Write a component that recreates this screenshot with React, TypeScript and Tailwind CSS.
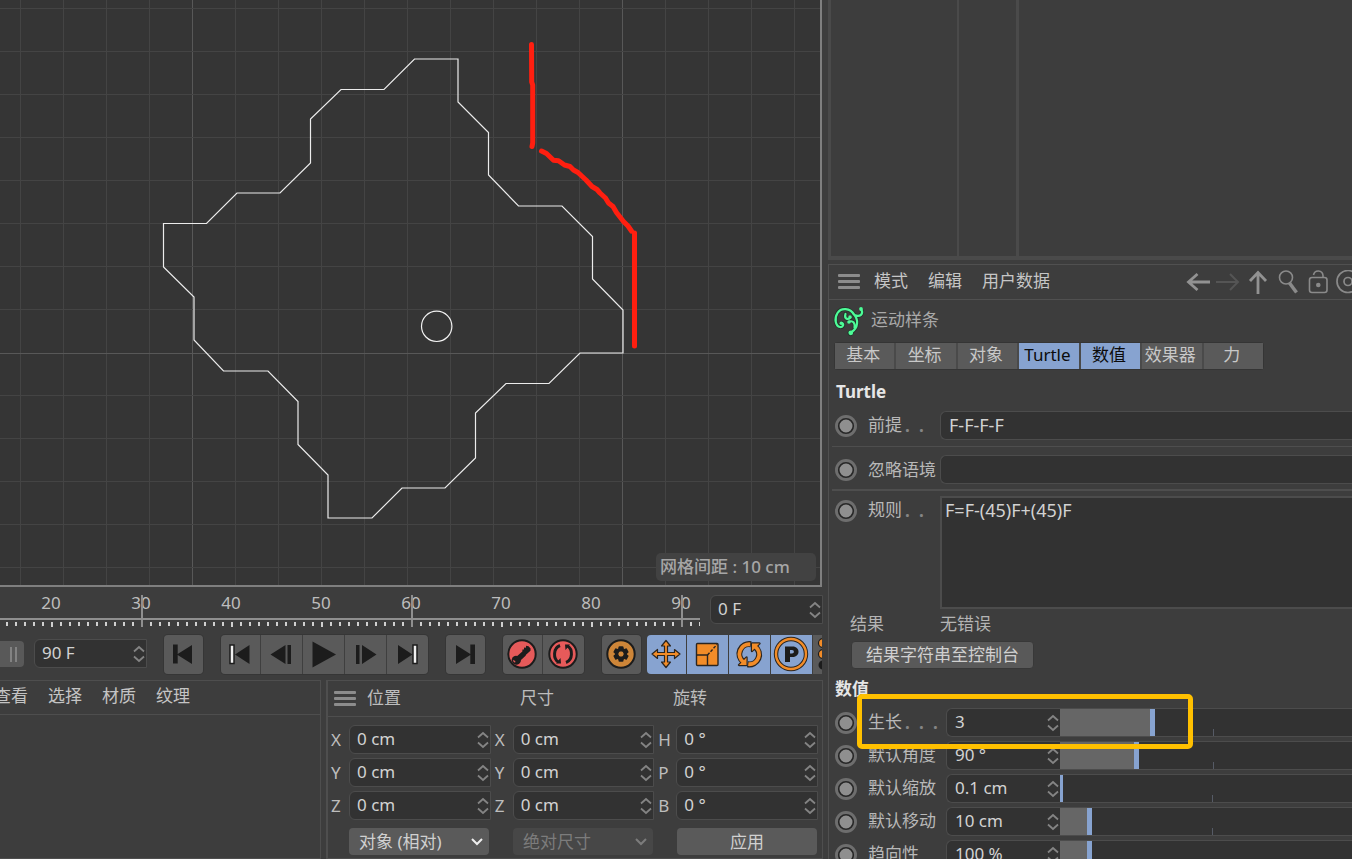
import React from "react";

const FONT = "font-['Noto_Sans','Noto_Sans_CJK_SC',sans-serif]";

const range = (n: number) => Array.from({ length: n }, (_, i) => i);

const SPLINE =
  "414.5,59 458,59 458,102 488.5,132.5 488.5,175 518.5,206 562,206 592.5,236.5 592.5,279 623,310 623,353 580,353 549,383.5 506,383.5 475.5,413 475.5,458 445,488 402,488 372,518 328,518 328,475 298,444.5 298,401.5 268,371 223.5,371 194,340 194,297 163.5,267 163.5,223.5 206.5,223.5 237,193 280,193 310.5,163 310.5,119 341,89.5 384,89.5";

function Viewport() {
  return (
    <section
      aria-label="viewport"
      className="relative min-h-0 flex-1 overflow-hidden border-r-2 border-b-2 border-[#7f7f7f] bg-[#353535] mr-[6px]"
    >
      <svg className="block h-full w-full" aria-hidden="true">
        {range(60).map((i) => {
          const x = 20 + i * 43;
          const major = (x - 192) % 430 === 0;
          return (
            <rect key={`v${i}`} x={x} y="0" width="1" height="100%" fill={major ? "#585858" : "#444444"} />
          );
        })}
        {range(40).map((i) => {
          const y = 9 + i * 43;
          const major = (y - 353) % 430 === 0;
          return (
            <rect key={`h${i}`} x="0" y={major ? y : y - 1} width="100%" height="1" fill={major ? "#585858" : "#444444"} />
          );
        })}
        <polygon points={SPLINE} fill="none" stroke="#ececec" strokeWidth="1.2" />
        <circle cx="436.7" cy="326.3" r="15.2" fill="none" stroke="#f2f2f2" strokeWidth="1.2" />
        <g fill="none" stroke="#ff1f10" strokeWidth="5" strokeLinecap="round" strokeLinejoin="round">
          <path d="M531.5 44.5 L531.7 82 L532.7 85 L532.7 143 L532 146.5" />
          <path d="M541.5 151 L546.5 153.5 L553.5 160.3 L558.5 160.8 L564.5 165 L570 166.5 L573.5 170 L578 172.5 L586 180 L592 186.5 L597 189.5 L600 193 L605.5 198 L608.5 203 L613 206.5 L616.5 212.5 L623.5 221.5 L628 226 L631.5 231" />
          <path d="M634.5 233 V346" />
        </g>
      </svg>
      <div className="absolute right-[4px] bottom-[4px] w-[160px] rounded-[5px] bg-[#424242] px-[4px] text-[17px] leading-[28px] font-medium text-[#a6a6a6]">
        网格间距 : 10 cm
      </div>
    </section>
  );
}

function Spinner() {
  return (
    <svg width="12" height="18" viewBox="0 0 12 18" className="mr-[1px] shrink-0" fill="none" stroke="#848484" strokeWidth="1.8" aria-hidden="true">
      <path d="M1 6.5 L6 2 L11 6.5 M1 11.5 L6 16 L11 11.5" />
    </svg>
  );
}

function NumberField({ label, value, className = "" }: { label: string; value: string; className?: string }) {
  return (
    <div className={`flex h-[29px] items-center rounded-l-[6px] border border-[#4c4c4c] bg-[#323232] pl-[7px] ${className}`}>
      <input
        aria-label={label}
        defaultValue={value}
        className="h-full w-0 min-w-0 flex-1 bg-transparent pb-[2px] text-[17px] text-[#d2d2d2] outline-none"
      />
      <Spinner />
    </div>
  );
}

function Timeline() {
  return (
    <div className="flex h-[46px] items-start">
      <div className="relative h-full w-[700px] shrink-0">
        <div className="flex pl-[6px] text-[17px] leading-[32px] text-[#bdbdbd]">
          {[20, 30, 40, 50, 60, 70, 80, 90].map((n) => (
            <span key={n} className="w-[90px] shrink-0 text-center">
              {n}
            </span>
          ))}
        </div>
        <svg className="absolute inset-0 h-full w-full" aria-hidden="true">
          <rect x="0" y="31" width="700" height="2" fill="#8f8f8f" />
          {range(78).map((i) => {
            const frame = 15 + i;
            const x = 142 + (frame - 30) * 9 - 1;
            return <rect key={i} x={x} y="35" width="2" height={frame % 10 === 0 ? 5 : 4} fill="#d0d0d0" />;
          })}
          {[141, 411, 681].map((x) => (
            <rect key={x} x={x} y="8" width="2" height="32" fill="#8f8f8f" />
          ))}
        </svg>
      </div>
      <NumberField label="当前帧" value="0 F" className="mt-[8px] ml-[10px] w-[113px]" />
    </div>
  );
}

function Tool({
  label,
  first,
  last,
  active,
  children,
}: {
  label: string;
  first?: boolean;
  last?: boolean;
  active?: boolean;
  children: React.ReactNode;
}) {
  return (
    <button
      type="button"
      aria-label={label}
      className={`flex h-[39px] shrink-0 items-center overflow-hidden ${active ? "bg-[#87a3d0]" : "bg-[#5a5a5a]"} ${
        first ? "w-[39px] rounded-l-[4px]" : "w-[42px] border-l border-[#3f3f3f]"
      } ${last ? "rounded-r-[4px]" : ""}`}
    >
      <svg width="40" height="39" viewBox="0 0 40 39" className="shrink-0" fill="#1c1c1c">
        {children}
      </svg>
    </button>
  );
}

const group = "flex shrink-0 rounded-[4px] ring-1 ring-[#363636]";

function Transport() {
  return (
    <div className="mr-[6px] flex h-[47px] items-start overflow-hidden pt-[2px]">
      <div className="mt-[6px] flex h-[26px] w-[24px] shrink-0 items-center justify-center gap-[3px] rounded-r-[4px] bg-[#595959] pl-[3px]">
        <i className="h-[15px] w-[2px] bg-[#828282]" />
        <i className="h-[15px] w-[2px] bg-[#828282]" />
      </div>
      <NumberField label="结束帧" value="90 F" className="mt-[4px] ml-[10px] w-[113px] shrink-0" />
      <div className={`${group} ml-[17px]`}>
        <Tool label="转到开始" first last>
          <path d="M9 9.5h4.7v9.6L28 10v19L13.700 20v8.500H9z" />
        </Tool>
      </div>
      <div className={`${group} ml-[18px]`}>
        <Tool label="上一关键帧" first>
          <rect x="9" y="10" width="4" height="18.500" fill="#f0f0f0" stroke="#1c1c1c" strokeWidth="1.500" />
          <path d="M14 19.500L28.500 10v19z" />
        </Tool>
        <Tool label="上一帧">
          <path d="M9.500 19.500L24.500 10v19zM26.500 10h3.500v19h-3.500z" />
        </Tool>
        <Tool label="播放">
          <path d="M9.500 6.500L33 19.500L9.500 32.500z" />
        </Tool>
        <Tool label="下一帧">
          <path d="M11 10h3.500v19H11zM17 10L31.500 19.500L17 29z" />
        </Tool>
        <Tool label="下一关键帧" last>
          <path d="M11 10L25.500 19.500L11 29z" />
          <rect x="26" y="10" width="4" height="18.500" fill="#f0f0f0" stroke="#1c1c1c" strokeWidth="1.500" />
        </Tool>
      </div>
      <div className={`${group} ml-[18px]`}>
        <Tool label="转到结束" first last>
          <path d="M10 10L24.300 19V9.500H29V29h-4.700v-9L10 29z" />
        </Tool>
      </div>
      <div className={`${group} ml-[18px]`}>
        <Tool label="记录活动对象" first>
          <circle cx="19" cy="19" r="13.700" fill="#e65a5a" stroke="#1c1c1c" strokeWidth="2" />
          <g transform="rotate(-42 19 19)">
            <path d="M9.500 15.300a4.600 4.600 0 0 1 4.600 2H21l1.300-1.300 1.200 1 1.300-1.500 1.200 1.500 1.500-1.300 1.500 2v3l-1.500 1.500h-6l-1 .500h-6.200a4.600 4.600 0 1 1-4.800-7.400zM9 17.700a1.500 1.500 0 1 0 .01 3z" fillRule="evenodd" />
          </g>
        </Tool>
        <Tool label="自动关键帧" last>
          <circle cx="20" cy="19" r="13.700" fill="#e65a5a" stroke="#1c1c1c" strokeWidth="2" />
          <g fill="none" stroke="#1c1c1c" strokeWidth="3">
            <path d="M17 10.500C10 13 10 24 15.500 27" />
            <path d="M23 27.500C30 25 30 14 24.500 11" />
          </g>
          <path d="M18 28.500L13 28.500L17.500 23zM22 9.500h5L22.500 15z" />
        </Tool>
      </div>
      <div className={`${group} ml-[18px]`}>
        <Tool label="关键帧选集" first last>
          <circle cx="19" cy="19" r="13.700" fill="#cd8538" stroke="#1c1c1c" strokeWidth="2" />
          {range(6).map((i) => (
            <rect key={i} x="16.500" y="11.300" width="5" height="5" rx="1" transform={`rotate(${i * 60} 19 19)`} />
          ))}
          <circle cx="19" cy="19" r="4.500" fill="none" stroke="#1c1c1c" strokeWidth="3.500" />
        </Tool>
      </div>
      <div className="ml-[6px] flex shrink-0">
        <Tool label="移动" first active>
          <path
            d="M19 5.500l4.500 5.500h-3v6.500h7v-3l5.500 4.500-5.500 4.500v-3h-7v6.500h3l-4.500 5.500-4.500-5.500h3v-6.500h-7v3l-5.500-4.500 5.500-4.500v3h7v-6.500h-3z"
            fill="#f28c28"
            stroke="#2b2520"
            strokeWidth="1.200"
            strokeLinejoin="round"
          />
        </Tool>
        <Tool label="缩放" active>
          <rect x="9.500" y="8.500" width="21.500" height="22" rx="1" fill="#f28c28" stroke="#2b2520" strokeWidth="1.400" />
          <path d="M9.500 20h11v10.500" fill="none" stroke="#2b2520" strokeWidth="1.400" />
          <path d="M20.500 20L30 9.500" fill="none" stroke="#2b2520" strokeWidth="1.400" strokeDasharray="3 1.500" />
        </Tool>
        <Tool label="旋转" active>
          <g fill="#f28c28" stroke="#2b2520" strokeWidth="2.400" strokeLinejoin="round">
            <path d="M10 30h7.500v-7.500zM30.500 8.500H23V16z" />
          </g>
          <path d="M14.500 26.800A9.800 9.800 0 0 1 22 9.200M26 11.700A9.800 9.800 0 0 1 18.500 29.300" fill="none" stroke="#2b2520" strokeWidth="6" />
          <path d="M14.500 27A9.800 9.800 0 0 1 21.200 9.300M26 11.500A9.800 9.800 0 0 1 19.300 29.200" fill="none" stroke="#f28c28" strokeWidth="3.800" />
          <path d="M10 30h7.500v-7.500zM30.500 8.500H23V16z" fill="#f28c28" />
        </Tool>
        <Tool label="参数" active>
          <circle cx="20" cy="19" r="15" fill="none" stroke="#2b2520" strokeWidth="4.400" />
          <circle cx="20" cy="19" r="15" fill="none" stroke="#f28c28" strokeWidth="2.400" />
          <path d="M14 11.500h7.500c8 0 8 10.500 0 10.500H19v5h-5zM19 15v3.500h2c2.500 0 2.500-3.500 0-3.500z" fillRule="evenodd" />
        </Tool>
        <Tool label="点级别动画">
          <circle cx="10" cy="8" r="4.500" fill="#f28c28" stroke="#1c1c1c" strokeWidth="1.200" />
          <circle cx="10" cy="19" r="4.500" fill="#f28c28" stroke="#1c1c1c" strokeWidth="1.200" />
          <circle cx="10" cy="30" r="4.500" />
        </Tool>
      </div>
    </div>
  );
}

function MenuIcon() {
  return (
    <svg width="22" height="16" viewBox="0 0 22 16" fill="#8c8c8c" aria-hidden="true" className="shrink-0">
      <rect width="22" height="3" rx="1" />
      <rect y="6" width="22" height="3" rx="1" />
      <rect y="12" width="22" height="3" rx="1" />
    </svg>
  );
}

function Materials() {
  return (
    <section className="w-[321px] shrink-0 border-t border-r border-b border-[#4e4e4e]">
      <nav className="-ml-[6px] flex h-[34px] items-center gap-[20px] border-b border-[#4e4e4e] pb-[4px] text-[17px] text-[#c4c4c4]">
        {["查看", "选择", "材质", "纹理"].map((t) => (
          <button type="button" key={t} className="leading-[20px]">
            {t}
          </button>
        ))}
      </nav>
    </section>
  );
}

const AXES = [
  { title: "位置", labels: ["X", "Y", "Z"], value: "0 cm" },
  { title: "尺寸", labels: ["X", "Y", "Z"], value: "0 cm" },
  { title: "旋转", labels: ["H", "P", "B"], value: "0 °" },
];

function Dropdown({ label, option, disabled }: { label: string; option: string; disabled?: boolean }) {
  return (
    <div
      className={`relative ml-[18px] h-[27px] w-[140px] rounded-[4px] ${
        disabled ? "bg-[#474747] text-[#7c7c7c]" : "bg-[#5a5a5a] text-[#d0d0d0]"
      }`}
    >
      <select
        aria-label={label}
        disabled={disabled}
        className="h-full w-full appearance-none bg-transparent pl-[10px] text-[17px] leading-[26px] text-inherit opacity-100 outline-none"
      >
        <option>{option}</option>
      </select>
      <svg
        className="pointer-events-none absolute top-[10px] right-[6px]"
        width="12"
        height="8"
        viewBox="0 0 12 8"
        fill="none"
        stroke={disabled ? "#7c7c7c" : "#ededed"}
        strokeWidth="2"
        aria-hidden="true"
      >
        <path d="M1 1 L6 6 L11 1" />
      </svg>
    </div>
  );
}

function Coordinates() {
  return (
    <section className="ml-[5px] mr-[5px] min-w-0 flex-1 border border-l-2 border-[#4e4e4e]">
      <header className="flex h-[36px] items-center border-b border-[#4e4e4e] pl-[6px] text-[17px] text-[#bdbdbd]">
        <MenuIcon />
        <span className="ml-[11px] w-[153px] pb-[2px]">位置</span>
        <span className="w-[153px] pb-[2px]">尺寸</span>
        <span className="pb-[2px]">旋转</span>
      </header>
      <div className="mt-[8px] grid grid-cols-3 gap-x-[4px] pr-[4px] pl-[3px]">
        {AXES.map((axis) => (
          <div key={axis.title} className="grid gap-y-[4px]">
            {axis.labels.map((l) => (
              <div key={l} className="flex items-center text-[17px] text-[#bdbdbd]">
                <span className="w-[18px] shrink-0">{l}</span>
                <NumberField label={`${axis.title} ${l}`} value={axis.value} className="min-w-0 flex-1" />
              </div>
            ))}
          </div>
        ))}
      </div>
      <div className="mt-[8px] grid grid-cols-3 gap-x-[4px] px-[3px]">
        <Dropdown label="坐标模式" option="对象 (相对)" />
        <Dropdown label="尺寸模式" option="绝对尺寸" disabled />
        <button type="button" className="ml-[18px] h-[27px] w-[140px] rounded-[4px] bg-[#5a5a5a] text-[17px] leading-[26px] text-[#d0d0d0]">
          应用
        </button>
      </div>
    </section>
  );
}

function KeyDot() {
  return (
    <button type="button" aria-label="关键帧" className="flex h-[29px] w-[22px] shrink-0 items-center">
      <svg width="22" height="23" viewBox="0 0 22 23" aria-hidden="true">
        <circle cx="11" cy="12" r="11" fill="#6e6e6e" />
        <circle cx="11" cy="12" r="7.300" fill="#8f8f8f" stroke="#272727" strokeWidth="1.600" />
      </svg>
    </button>
  );
}

function FieldLabel({ id, text, dots = 0, className }: { id: string; text: string; dots?: number; className: string }) {
  return (
    <label htmlFor={id} className={`ml-[11px] flex shrink-0 text-[17px] leading-[27px] text-[#b8b8b8] ${className}`}>
      {text}
      {range(dots).map((i) => (
        <span key={i} className="w-[14px] pl-[3px] leading-[29px] font-bold text-[#858585]">
          .
        </span>
      ))}
    </label>
  );
}

const SLIDERS = [
  { id: "growth", text: "生长", dots: 3, value: "3", fill: 32.5, tick: 52.5 },
  { id: "angle", text: "默认角度", value: "90 °", fill: 27.2, tick: 52.5 },
  { id: "scale", text: "默认缩放", value: "0.1 cm", fill: 0.8, tick: 52 },
  { id: "move", text: "默认移动", value: "10 cm", fill: 11, tick: 52 },
  { id: "tropism", text: "趋向性", value: "100 %", fill: 11, tick: 52 },
];

function SliderRow({ id, text, dots, value, fill, tick }: (typeof SLIDERS)[number]) {
  return (
    <div className="flex shrink-0 items-start">
      <KeyDot />
      <FieldLabel id={id} text={text} dots={dots} className="w-[78px]" />
      <div className="flex h-[29px] w-[114px] shrink-0 items-center rounded-l-[6px] border border-r-0 border-[#4c4c4c] bg-[#323232] pl-[8px]">
        <input id={id} defaultValue={value} className="h-full w-0 min-w-0 flex-1 bg-transparent pb-[2px] text-[17px] text-[#d2d2d2] outline-none" />
        <Spinner />
      </div>
      <div className="relative h-[29px] min-w-0 flex-1 border-y border-[#4c4c4c] bg-[#323232]">
        <div className="h-full border-r-[5px] border-[#87a3d0] bg-[#666666]" style={{ width: `${fill}%`, borderRightWidth: fill < 2 ? 3 : 5 }} />
        <span className="absolute bottom-0 h-[7px] w-px bg-[#565b66]" style={{ left: `${tick}%` }} />
        <input type="range" aria-label={text} min="0" max="100" defaultValue={fill} className="absolute inset-0 h-full w-full opacity-0" />
      </div>
    </div>
  );
}

function HeaderIcons() {
  const base = "shrink-0";
  return (
    <div className="-mr-[8px] ml-auto flex gap-[6px]">
      <svg className={base} width="24" height="24" viewBox="0 0 24 24" fill="none" stroke="#929292" strokeWidth="2.800">
        <path d="M24 12H2.500M11.500 4L2.500 12l9 8" />
      </svg>
      <svg className={base} width="24" height="24" viewBox="0 0 24 24" fill="none" stroke="#555555" strokeWidth="2">
        <path d="M0 12h22M14 4l8 8-8 8" />
      </svg>
      <svg className={base} width="24" height="24" viewBox="0 0 24 24" fill="none" stroke="#929292" strokeWidth="2.800">
        <path d="M12 24V2.500M4 11l8-8.500 8 8.500" />
      </svg>
      <svg className={base} width="24" height="24" viewBox="0 0 24 24" fill="none" stroke="#8a8a8a">
        <circle cx="10" cy="7.500" r="6.500" strokeWidth="1.600" />
        <path d="M13.500 13L20.500 22.500" strokeWidth="3.500" />
      </svg>
      <svg className={base} width="24" height="24" viewBox="0 0 24 24" fill="none" stroke="#8a8a8a" strokeWidth="1.600">
        <rect x="3.500" y="7.500" width="17.500" height="15" rx="2.500" />
        <path d="M7.500 5C8.500-.5 16.500-.5 17 5.500V7.500" />
        <circle cx="12.300" cy="15" r="2.300" fill="#8a8a8a" stroke="none" />
      </svg>
      <svg className={base} width="24" height="24" viewBox="0 0 24 24" fill="none" stroke="#8a8a8a" strokeWidth="1.700">
        <circle cx="12" cy="11.500" r="11" />
        <circle cx="12" cy="11.500" r="4" />
      </svg>
    </div>
  );
}

function MoSplineIcon() {
  const strokes =
    "M28 4C31 9 27 12.500 21.500 10C17 2.500 8 2.500 4.500 8C1 13.500 2.500 21 7 22C10.500 22.500 11 18.500 9 18M20 8.500C26 14 25.500 23 18 27.500M12.500 9C11 13.500 14.500 15.500 17.500 12.500M16.500 16.500C20 15.500 22.500 18 21.500 23";
  return (
    <svg width="32" height="32" viewBox="0 0 32 32" fill="none" strokeLinecap="round" strokeLinejoin="round" aria-hidden="true">
      <g stroke="#23352b" fill="#23352b">
        <path d={strokes} strokeWidth="4" fill="none" />
        <circle cx="17.500" cy="28" r="2.600" />
      </g>
      <path d={strokes} stroke="#4dfb97" strokeWidth="2.200" />
      <g fill="#4dfb97">
        <circle cx="17.800" cy="27.800" r="2.400" />
        <circle cx="28" cy="4" r="1.900" />
        <circle cx="8.300" cy="18.300" r="1.700" />
        <circle cx="16" cy="17" r="1.800" />
        <circle cx="17" cy="12" r="1.700" />
      </g>
    </svg>
  );
}

function ObjectManager() {
  return (
    <section className="flex h-[260px] shrink-0 border-b-4 border-l-[3px] border-[#4a4a4a]" aria-label="objects">
      <div className="w-[128px] border-r-2 border-[#4a4a4a]" />
      <div className="w-[60px] border-r-[3px] border-[#4a4a4a]" />
    </section>
  );
}

const TABS = ["基本", "坐标", "对象", "Turtle", "数值", "效果器", "力"];

function Attributes() {
  return (
    <section className="mt-[4px] flex min-h-0 flex-1 flex-col overflow-hidden border-t border-l border-[#505050]">
      <header className="flex h-[35px] shrink-0 items-center gap-[20px] border-b border-[#505050] pl-[9px] text-[17px] text-[#c6c6c6]">
        <MenuIcon />
        <div className="-ml-[6px] flex gap-[20px] pb-[2px]">
          <button type="button">模式</button>
          <button type="button">编辑</button>
          <button type="button">用户数据</button>
        </div>
        <HeaderIcons />
      </header>
      <div className="flex h-[42px] shrink-0 items-center gap-[6px] pl-[4px] text-[17px] text-[#a9a9a9]">
        <MoSplineIcon />
        <span className="pb-[2px]">运动样条</span>
      </div>
      <div role="tablist" className="ml-[5px] flex h-[28px] w-[430px] shrink-0 gap-[2px] rounded-[3px] border border-[#353535] bg-[#4a4a4a] text-[17px] leading-[24px]">
        {TABS.map((t) => {
          const on = t === "Turtle" || t === "数值";
          return (
            <button
              key={t}
              type="button"
              role="tab"
              aria-selected={on}
              className={`flex-1 basis-0 pr-[3px] pb-[2px] ${on ? "bg-[#87a3d0] text-[#0c0c0c]" : "bg-[#5a5a5a] text-[#c8c8c8]"}`}
            >
              {t}
            </button>
          );
        })}
      </div>
      <h2 className="ml-[7px] h-[41px] shrink-0 text-[17px] leading-[43px] font-bold text-[#e6e6e6]">Turtle</h2>
      <div className="ml-[3px] flex shrink-0 items-center border-b border-[#4e4e4e] pb-[6px] pl-[3px]">
        <KeyDot />
        <FieldLabel id="premise" text="前提" dots={2} className="w-[72px]" />
        <input
          id="premise"
          defaultValue="F-F-F-F"
          className="h-[29px] min-w-0 flex-1 rounded-l-[6px] border border-r-0 border-[#4c4c4c] bg-[#323232] pb-[2px] pl-[8px] text-[18px] text-[#d2d2d2] outline-none"
        />
      </div>
      <div className="ml-[3px] flex shrink-0 items-center border-b-2 border-[#4e4e4e] pt-[8px] pb-[5px] pl-[3px]">
        <KeyDot />
        <FieldLabel id="context" text="忽略语境" className="w-[72px]" />
        <input
          id="context"
          className="h-[29px] min-w-0 flex-1 rounded-l-[6px] border border-r-0 border-[#4c4c4c] bg-[#323232] pl-[8px] text-[18px] text-[#d2d2d2] outline-none"
        />
      </div>
      <div className="ml-[6px] flex shrink-0 items-start pt-[5px]">
        <KeyDot />
        <FieldLabel id="rules" text="规则" dots={2} className="w-[72px]" />
        <textarea
          id="rules"
          defaultValue="F=F-(45)F+(45)F"
          className="block h-[113px] min-w-0 flex-1 resize-none border-2 border-r-0 border-[#4c4c4c] bg-[#323232] pl-[3px] text-[18px] leading-[24px] text-[#d2d2d2] outline-none"
        />
      </div>
      <div className="ml-[21px] flex h-[32px] shrink-0 items-center pb-[2px] text-[17px] text-[#b4b4b4]">
        <span className="w-[90px]">结果</span>
        <span>无错误</span>
      </div>
      <button
        type="button"
        className="ml-[22px] h-[28px] shrink-0 self-start rounded-[4px] border border-[#383838] bg-[#595959] px-[14px] text-[17px] leading-[24px] text-[#d0d0d0]"
      >
        结果字符串至控制台
      </button>
      <h2 className="ml-[6px] h-[39px] shrink-0 text-[17px] leading-[40px] font-bold text-[#e6e6e6]">数值</h2>
      <div className="relative ml-[6px] flex shrink-0 flex-col gap-[4px]">
        {SLIDERS.map((s) => (
          <SliderRow key={s.id} {...s} />
        ))}
        <div className="pointer-events-none absolute -top-[14px] left-[22px] h-[55px] w-[336px] rounded-[5px] border-[5px] border-[#ffc000]" />
      </div>
    </section>
  );
}

export default function App() {
  return (
    <main className={`flex h-screen overflow-hidden bg-[#3d3d3d] ${FONT}`}>
      <div className="flex min-w-0 flex-1 flex-col">
        <Viewport />
        <Timeline />
        <Transport />
        <div className="flex h-[179px] shrink-0">
          <Materials />
          <Coordinates />
        </div>
      </div>
      <aside className="flex w-[524px] shrink-0 flex-col overflow-hidden">
        <ObjectManager />
        <Attributes />
      </aside>
    </main>
  );
}
